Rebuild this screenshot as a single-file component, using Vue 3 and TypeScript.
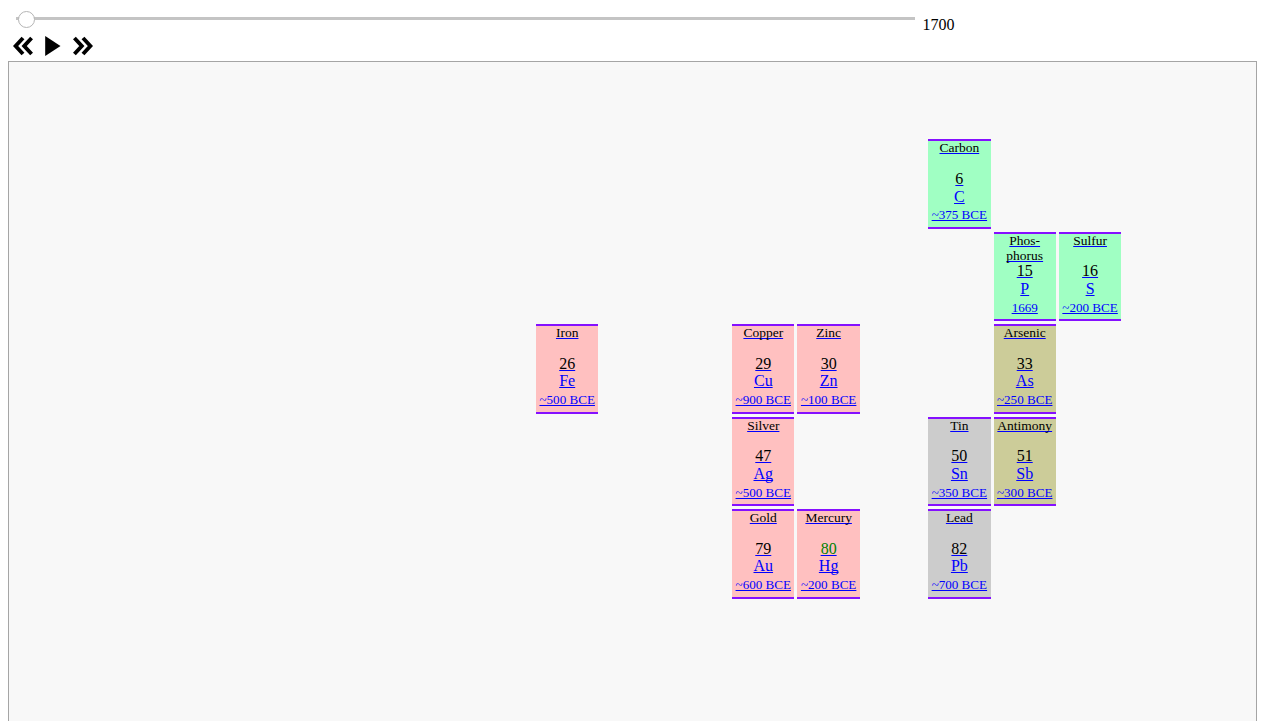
<script setup lang="ts">
import { ref } from 'vue'

interface Element {
  name: string[]
  number: number
  symbol: string
  found: string
  column: number
  row: number
  kind: 'metal' | 'nonmetal' | 'metalloid' | 'poor'
  liquid?: boolean
}

const year = ref(1700)

const elements: Element[] = [
  { name: ['Carbon'], number: 6, symbol: 'C', found: '~375 BCE', column: 14, row: 1, kind: 'nonmetal' },
  { name: ['Phos-', 'phorus'], number: 15, symbol: 'P', found: '1669', column: 15, row: 2, kind: 'nonmetal' },
  { name: ['Sulfur'], number: 16, symbol: 'S', found: '~200 BCE', column: 16, row: 2, kind: 'nonmetal' },
  { name: ['Iron'], number: 26, symbol: 'Fe', found: '~500 BCE', column: 8, row: 3, kind: 'metal' },
  { name: ['Copper'], number: 29, symbol: 'Cu', found: '~900 BCE', column: 11, row: 3, kind: 'metal' },
  { name: ['Zinc'], number: 30, symbol: 'Zn', found: '~100 BCE', column: 12, row: 3, kind: 'metal' },
  { name: ['Arsenic'], number: 33, symbol: 'As', found: '~250 BCE', column: 15, row: 3, kind: 'metalloid' },
  { name: ['Silver'], number: 47, symbol: 'Ag', found: '~500 BCE', column: 11, row: 4, kind: 'metal' },
  { name: ['Tin'], number: 50, symbol: 'Sn', found: '~350 BCE', column: 14, row: 4, kind: 'poor' },
  { name: ['Antimony'], number: 51, symbol: 'Sb', found: '~300 BCE', column: 15, row: 4, kind: 'metalloid' },
  { name: ['Gold'], number: 79, symbol: 'Au', found: '~600 BCE', column: 11, row: 5, kind: 'metal' },
  { name: ['Mercury'], number: 80, symbol: 'Hg', found: '~200 BCE', column: 12, row: 5, kind: 'metal', liquid: true },
  { name: ['Lead'], number: 82, symbol: 'Pb', found: '~700 BCE', column: 14, row: 5, kind: 'poor' },
]
</script>

<template>
  <main class="page">
    <div class="timeline">
      <input v-model="year" class="slider" type="range" min="1700" max="2020" aria-label="Year" />
      <span class="year">{{ year }}</span>
    </div>
    <div class="controls">
      <button aria-label="Back">
        <svg width="20" height="20" viewBox="0 0 20 20">
          <path d="M10 2 L2.6 10 L10 18 M18.6 2 L11.2 10 L18.6 18" />
        </svg>
      </button>
      <button aria-label="Play">
        <svg width="20" height="20" viewBox="0 0 20 20"><polygon points="2.2,0 17.5,10 2.2,20" /></svg>
      </button>
      <button aria-label="Forward">
        <svg width="20" height="20" viewBox="0 0 20 20">
          <path d="M1.4 2 L8.8 10 L1.4 18 M10 2 L17.4 10 L10 18" />
        </svg>
      </button>
    </div>
    <section class="chart">
      <a
        v-for="el in elements"
        :key="el.number"
        href="#"
        class="cell"
        :class="[el.kind, { liquid: el.liquid }]"
        :style="{ gridColumn: el.column, gridRow: el.row }"
      >
        <span class="name"><span v-for="part in el.name" :key="part" class="part">{{ part }}</span></span>
        <span class="number">{{ el.number }}</span>
        <span class="symbol">{{ el.symbol }}</span>
        <span class="found">{{ el.found }}</span>
      </a>
    </section>
  </main>
</template>

<style>
body {
  overflow: hidden;
}
</style>

<style scoped>
.page {
  box-sizing: border-box;
  height: 721px;
  padding: 8px 8px 0;
  overflow: hidden;
  background: #fff;
  font: 16px/18px "Liberation Serif", "Times New Roman", serif;
  color: #000;
}
.timeline {
  display: flex;
  height: 27px;
}
.slider {
  appearance: none;
  width: 899px;
  height: 16px;
  margin: 3px 7.5px 0 8px;
  background: linear-gradient(#c4c4c4, #c4c4c4) 0 6px / 100% 3px no-repeat;
  border-radius: 2px;
}
.slider::-webkit-slider-thumb {
  appearance: none;
  box-sizing: border-box;
  width: 17px;
  height: 17px;
  border: 1px solid #b5b5b5;
  border-radius: 50%;
  background: #fff;
  transform: translate(2px, 0);
}
.year {
  padding-top: 8px;
}
.controls {
  display: flex;
  gap: 10px;
  height: 26px;
  padding: 1px 0 0 5px;
  box-sizing: border-box;
}
.controls button {
  width: 20px;
  height: 20px;
  padding: 0;
  border: 0;
  background: none;
}
.controls svg {
  display: block;
}
.controls path {
  fill: none;
  stroke: #000;
  stroke-width: 3.9;
}
.chart {
  box-sizing: border-box;
  display: grid;
  grid-template-columns: repeat(18, 62.4px);
  grid-auto-rows: 89.5px;
  gap: 2.96px 2.98px;
  align-content: start;
  height: 700px;
  padding: 77.3px 0 0 69.5px;
  border: 1px solid #a5a5a5;
  background: #f8f8f8;
}
.cell {
  box-sizing: border-box;
  display: flex;
  flex-direction: column;
  align-items: center;
  border: solid #8510ff;
  border-width: 2px 0;
  color: #00f;
  text-decoration: none;
  white-space: nowrap;
}
.cell span {
  text-decoration-color: #00f;
  text-decoration-skip-ink: none;
}
.metal { background: #ffc0c0; }
.nonmetal { background: #a0ffc3; }
.metalloid { background: #cccc99; }
.poor { background: #ccc; }
.name {
  display: flex;
  flex-direction: column;
  align-items: center;
  height: 29.65px;
  margin-top: -1px;
  color: #000;
  font-size: 13.5px;
  line-height: 15px;
}
.part,
.number,
.symbol,
.found {
  text-decoration-line: underline;
}
.number {
  height: 17.6px;
  color: #000;
}
.symbol {
  height: 18.8px;
}
.liquid .number {
  color: #008000;
}
.found {
  font-size: 13.1px;
}
</style>
